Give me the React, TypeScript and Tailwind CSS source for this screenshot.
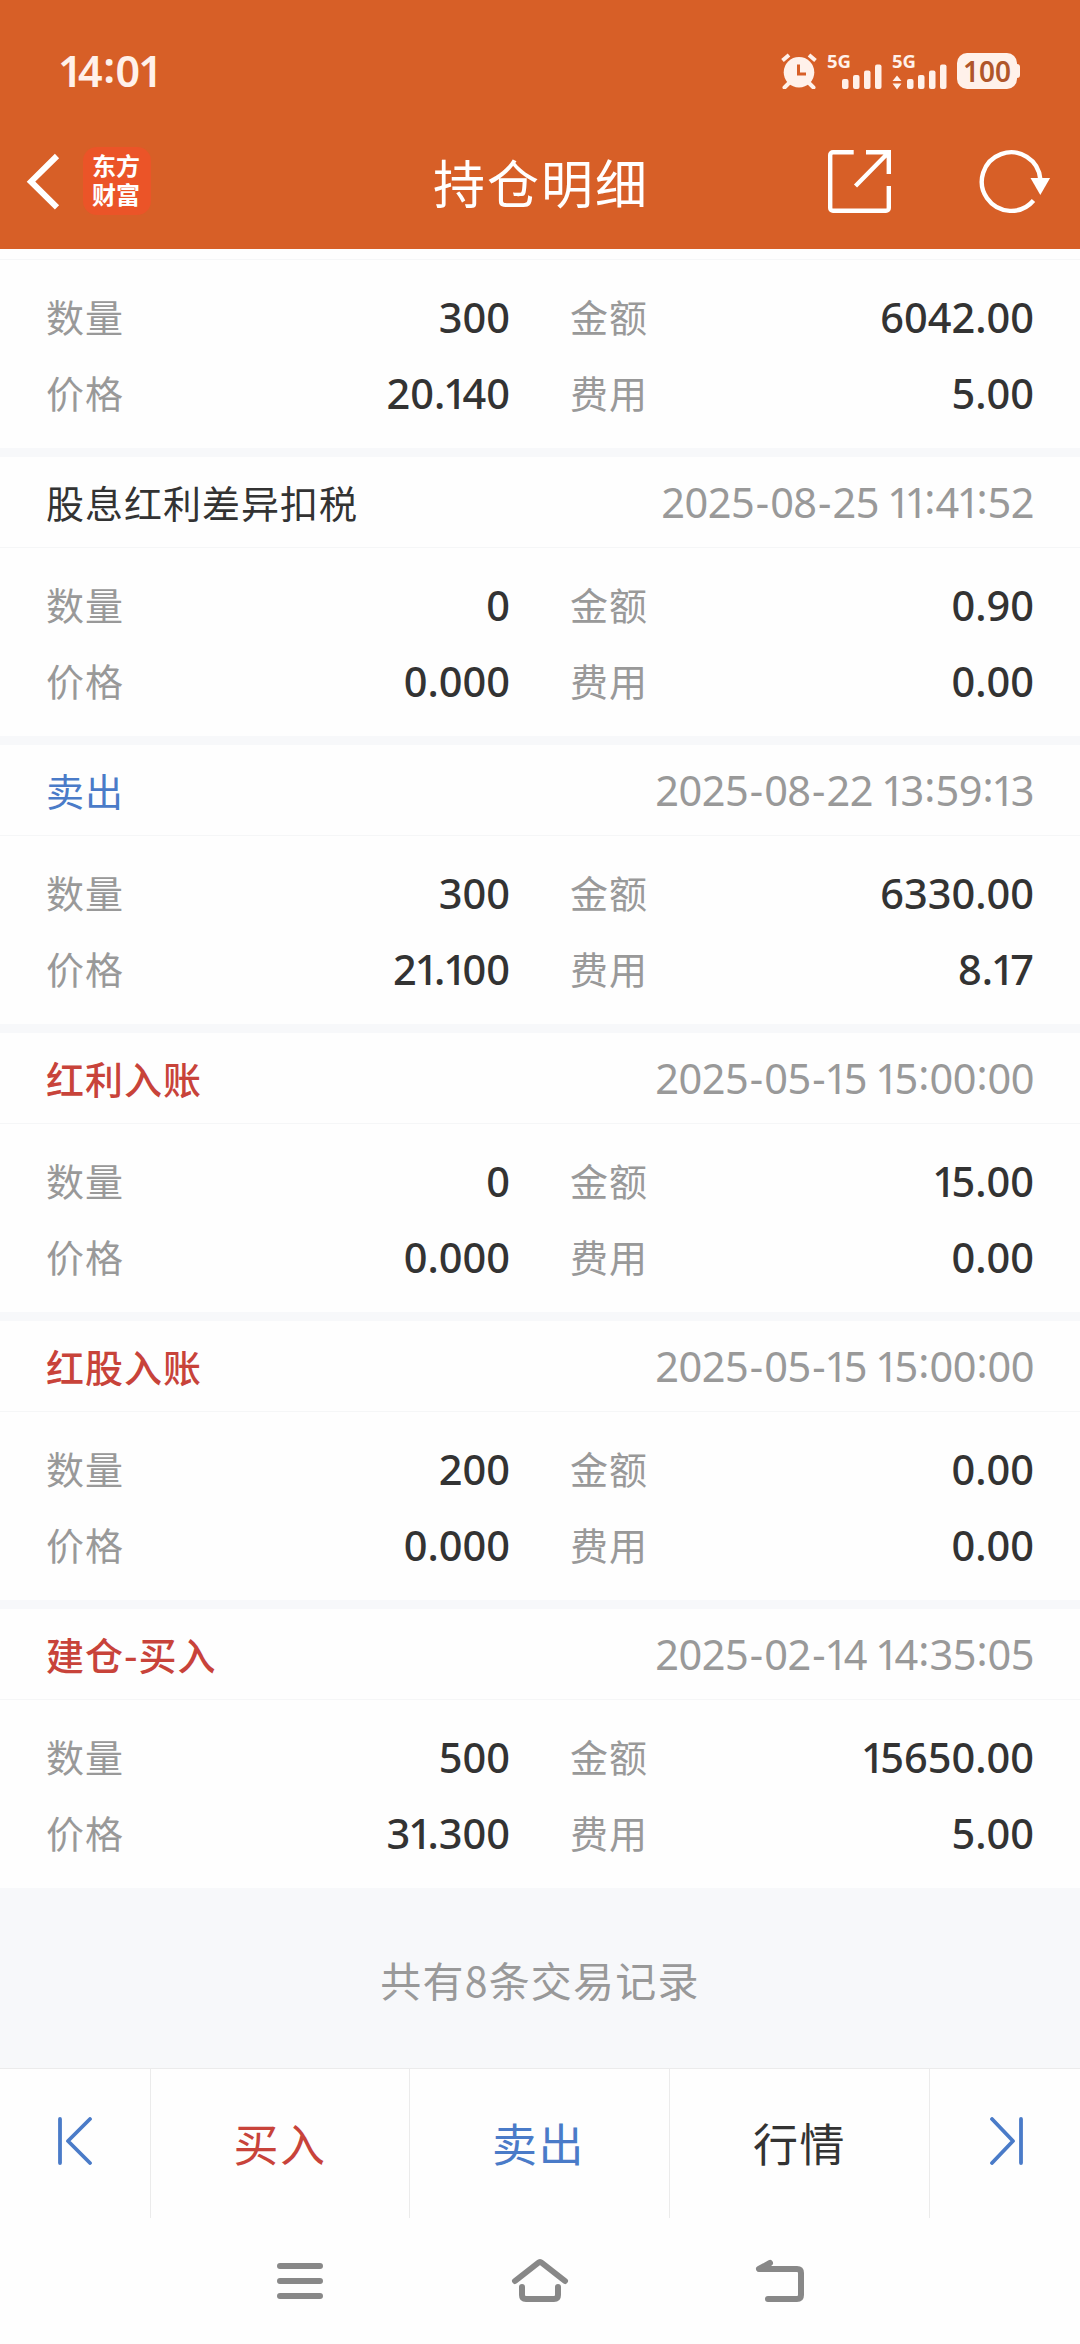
import clsx from "clsx";

type Tone = "plain" | "sell" | "buy";

type TradeRecord = {
  title: string;
  tone: Tone;
  time: string;
  amount: string;
  price: string;
  total: string;
  fee: string;
};

const first = { amount: "300", price: "20.140", total: "6042.00", fee: "5.00" };

const records: TradeRecord[] = [
  { title: "股息红利差异扣税", tone: "plain", time: "2025-08-25 11:41:52", amount: "0", price: "0.000", total: "0.90", fee: "0.00" },
  { title: "卖出", tone: "sell", time: "2025-08-22 13:59:13", amount: "300", price: "21.100", total: "6330.00", fee: "8.17" },
  { title: "红利入账", tone: "buy", time: "2025-05-15 15:00:00", amount: "0", price: "0.000", total: "15.00", fee: "0.00" },
  { title: "红股入账", tone: "buy", time: "2025-05-15 15:00:00", amount: "200", price: "0.000", total: "0.00", fee: "0.00" },
  { title: "建仓-买入", tone: "buy", time: "2025-02-14 14:35:05", amount: "500", price: "31.300", total: "15650.00", fee: "5.00" },
];

const toneClass: Record<Tone, string> = {
  plain: "text-[#333333]",
  sell: "text-[#4a7bc8]",
  buy: "text-[#c8433a] font-medium",
};

// narrow "1", roomier hyphen and raised colon
const glyphClass: Record<string, string> = {
  "1": "-ml-[2px] tracking-[-4.5px]",
  "-": "px-[1.5px]",
  ":": "px-[0.5px] align-[4px] leading-none",
};

function Digits({ value }: { value: string }) {
  return (
    <>
      {value.split(/([1:-])/).map((part, i) =>
        glyphClass[part] ? (
          <span key={i} className={glyphClass[part]}>
            {part}
          </span>
        ) : (
          part
        )
      )}
    </>
  );
}

function SignalBars() {
  return (
    <svg width="40" height="26" viewBox="0 0 40 26" fill="currentColor">
      <rect x="0" y="15" width="6.5" height="10" rx="2" />
      <rect x="11" y="11" width="6.5" height="14" rx="2" />
      <rect x="22" y="6.5" width="6.5" height="18.5" rx="2" />
      <rect x="33" y="0.5" width="6.5" height="24.5" rx="2" />
    </svg>
  );
}

function StatusBar() {
  return (
    <div className="flex h-[142px] items-start justify-between pl-[60px] pr-[60px] text-[#fff1ea]">
      <div className="mt-[45px] whitespace-nowrap font-['Noto_Sans'] text-[43px] font-semibold leading-[50px]">
        <Digits value="14:01" />
      </div>
      <div className="mt-[52px] flex h-[38px]">
        <svg className="mt-px" width="36" height="36" viewBox="0 0 36 36" fill="none" stroke="currentColor">
          <circle cx="18" cy="19.3" r="15.3" fill="currentColor" stroke="none" />
          <path d="M1.5 7.5 8 2M34.5 7.5 28 2" strokeWidth="4" />
          <path d="M8 30 3.5 34.5M28 30l4.5 4.5" strokeWidth="4" strokeLinecap="round" />
          <path d="M17.5 11.5v9.5h7.5" stroke="#d75f27" strokeWidth="3" />
        </svg>
        <div className="relative ml-[10px] w-[54px]">
          <span className="absolute left-0 top-0 font-['Noto_Sans'] text-[18.5px] font-bold leading-[17px]">5G</span>
          <span className="absolute left-[15px] top-[12px]">
            <SignalBars />
          </span>
        </div>
        <div className="relative ml-[11px] w-[54px]">
          <span className="absolute left-0 top-0 font-['Noto_Sans'] text-[18.5px] font-bold leading-[17px]">5G</span>
          <svg className="absolute left-0 top-[23px]" width="10" height="15" viewBox="0 0 10 15" fill="currentColor">
            <path d="M5 0.5 9.5 6h-9zM5 14.5 9.5 8.5h-9z" />
          </svg>
          <span className="absolute left-[15px] top-[12px]">
            <SignalBars />
          </span>
        </div>
        <div className="ml-[11px] mt-px flex h-[36px] items-center">
          <div className="flex h-[36px] w-[60px] items-center justify-center rounded-[10px] bg-[#fff1ea] font-['Noto_Sans'] text-[28px] font-semibold leading-none text-[#b0562a]">
            100
          </div>
          <div className="h-[14px] w-[3px] rounded-r bg-[#fff1ea]" />
        </div>
      </div>
    </div>
  );
}

function TitleBar() {
  return (
    <div className="flex h-[107px] items-start text-white">
      <svg className="ml-[24px] mt-[11px]" width="36" height="58" viewBox="0 0 36 58" fill="none" stroke="currentColor" strokeWidth="6">
        <path d="M33 3 7 28.7 33 54.4" />
      </svg>
      <div className="ml-[23px] mt-[5px] h-[68px] w-[68px] rounded-[14px] bg-[#eb5428] pl-[9px] pt-[3px]">
        <div className="w-[50px] break-all text-[24px] font-bold leading-[29px]">东方财富</div>
      </div>
      <h1 className="ml-[282px] mt-[5px] w-[216px] whitespace-nowrap text-[52px] leading-[70px] tracking-[2px]">持仓明细</h1>
      <svg className="ml-[179px] mt-[8px]" width="63" height="63" viewBox="0 0 63 63" fill="none" stroke="currentColor" strokeWidth="4.4">
        <path d="M25.7 2.2H5a2.8 2.8 0 0 0-2.8 2.8V58a2.8 2.8 0 0 0 2.8 2.8H58a2.8 2.8 0 0 0 2.8-2.8V36" />
        <path d="M38 2.2h22.8V24M60 3 27.5 36" />
      </svg>
      <svg className="ml-[87px] mt-[7px]" width="74" height="66" viewBox="0 0 74 66" fill="none" stroke="currentColor" strokeWidth="4.4">
        <path d="M55.5 51.5A29.3 29.3 0 1 1 62.3 30" />
        <path d="M52.5 29h19.6L62.3 46z" fill="currentColor" stroke="none" />
      </svg>
    </div>
  );
}

function Field({ label, value }: { label: string; value: string }) {
  return (
    <div className="flex w-[464px] items-center justify-between">
      <span className="-mt-[4px] text-[38px] tracking-[1px] text-[#999999]">{label}</span>
      <span className="font-['Noto_Sans'] text-[41.5px] font-medium text-[#333333]">
        <Digits value={value} />
      </span>
    </div>
  );
}

function RecordBody({ amount, price, total, fee }: Pick<TradeRecord, "amount" | "price" | "total" | "fee">) {
  return (
    <div className="flex h-[188px] flex-col px-[46px] pt-[19px]">
      <div className="flex h-[76px] items-center justify-between">
        <Field label="数量" value={amount} />
        <Field label="金额" value={total} />
      </div>
      <div className="flex h-[76px] items-center justify-between">
        <Field label="价格" value={price} />
        <Field label="费用" value={fee} />
      </div>
    </div>
  );
}

export default function App() {
  return (
    <div className="flex h-[2344px] w-[1080px] flex-col overflow-hidden bg-[#fefefe] font-['Noto_Sans_CJK_SC',sans-serif]">
      <header className="h-[249px] shrink-0 bg-[#d75f27]">
        <StatusBar />
        <TitleBar />
      </header>

      <main className="flex h-[1819px] flex-col bg-[#f7f8fa]">
        <section className="bg-[#fefefe]">
          <div className="h-[11px] border-b border-[#f5f6f7]" />
          <RecordBody {...first} />
        </section>
        {records.map((r) => (
          <section key={r.title} className="mt-[9px] bg-[#fefefe]">
            <div className="flex h-[91px] items-center justify-between border-b border-[#f5f6f7] px-[46px]">
              <span className={clsx("-mt-[2px] text-[38px] tracking-[1px]", toneClass[r.tone])}>{r.title}</span>
              <span className="pt-px font-['Noto_Sans'] text-[41.5px] tracking-[-0.5px] text-[#999999]">
                <Digits value={r.time} />
              </span>
            </div>
            <RecordBody {...r} />
          </section>
        ))}
        <p className="flex flex-1 items-center justify-center pt-[3px] text-[41px] tracking-[1.2px] text-[#999999]">共有8条交易记录</p>
      </main>

      <div className="flex h-[150px] shrink-0 border-t border-[#ebebeb] text-[45px] tracking-[1.5px]">
        <button type="button" className="w-[151px] border-r border-[#ebebeb] pl-[56px] text-[#4a7bc8]">
          <svg className="-mt-[6px]" width="38" height="48" viewBox="0 0 38 48" fill="none" stroke="currentColor" strokeWidth="3.8" strokeLinecap="round" strokeLinejoin="round">
            <path d="M4 2v44M34 2 12 24l22 22" />
          </svg>
        </button>
        <button type="button" className="w-[259px] border-r border-[#ebebeb] pb-px text-[#c8433a]">买入</button>
        <button type="button" className="w-[260px] border-r border-[#ebebeb] pb-px pr-[2px] text-[#4a7bc8]">卖出</button>
        <button type="button" className="w-[260px] border-r border-[#ebebeb] pb-px text-[#333333]">行情</button>
        <button type="button" className="flex-1 pl-[57px] text-[#4a7bc8]">
          <svg className="-mt-[6px]" width="38" height="48" viewBox="0 0 38 48" fill="none" stroke="currentColor" strokeWidth="3.8" strokeLinecap="round" strokeLinejoin="round">
            <path d="M34 2v44M5 2l21 22L5 46" />
          </svg>
        </button>
      </div>

      <nav className="flex flex-1 items-start pt-[38px] text-[#888888]">
        <svg className="ml-[277px]" width="46" height="48" viewBox="0 0 46 48" fill="none" stroke="currentColor" strokeWidth="6" strokeLinecap="round">
          <path d="M3 10h40M3 25h40M3 40h40" />
        </svg>
        <svg className="ml-[188px]" width="58" height="48" viewBox="0 0 58 48" fill="none" stroke="currentColor" strokeWidth="6" strokeLinecap="round" strokeLinejoin="round">
          <path d="M4 25 27 7q2-1.6 4 0l23 18" />
          <path d="M11 31v8q0 4 4 4h28q4 0 4-4v-8" />
        </svg>
        <svg className="ml-[186px]" width="50" height="48" viewBox="0 0 50 48" fill="none" stroke="currentColor" strokeWidth="6" strokeLinecap="round" strokeLinejoin="round">
          <path d="M15 7 4 13h38q4 0 4 4v22q0 4-4 4H13" />
        </svg>
      </nav>
    </div>
  );
}
